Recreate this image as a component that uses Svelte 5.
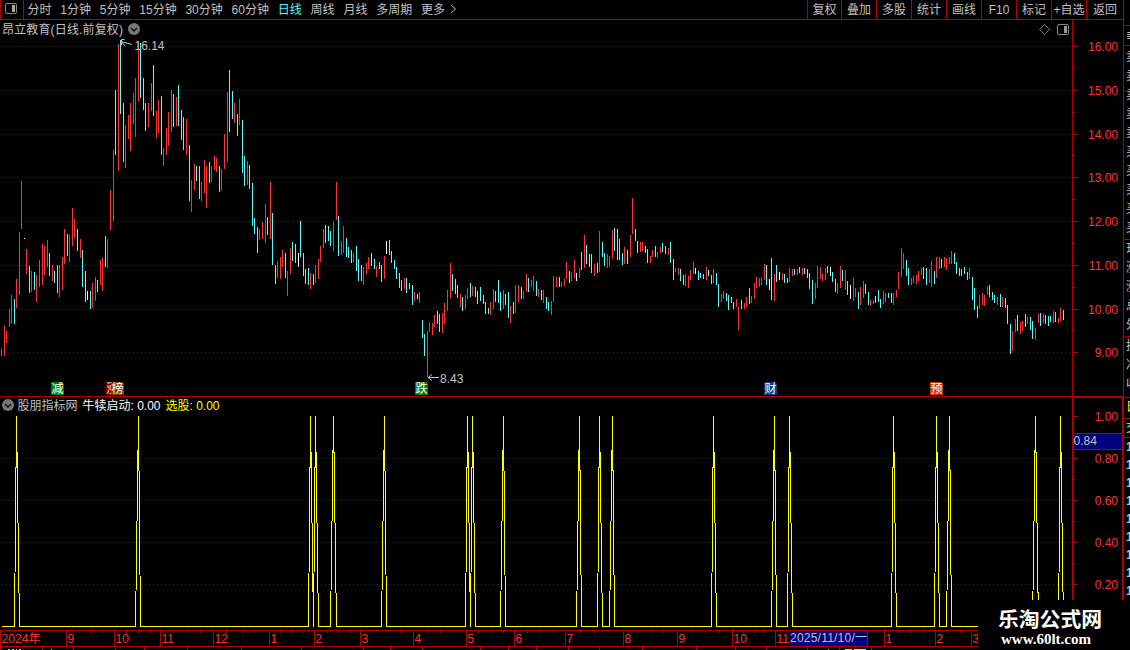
<script>
    const periods = ["分时", "1分钟", "5分钟", "15分钟", "30分钟", "60分钟", "日线", "周线", "月线", "多周期", "更多"];
    const tools = ["复权", "叠加", "多股", "统计", "画线", "F10", "标记", "+自选", "返回"];
    let active = $state("日线");

    // x, high, low, colour (r = up, c = down, w = flat)
    const raw = `1 349 356 r,4 326 356 r,6 331 343 r,9 309 327 r,11 295 324 r,14 299 324 c,16 279 308 r,19 232 295 r,21 181 229 r,24 238 239 w,
26 249 274 r,29 266 293 c,31 271 292 r,34 272 290 c,36 275 302 r,39 260 287 r,42 244 285 r,44 246 275 r,47 240 267 r,49 253 276 c,
52 265 281 r,54 271 283 c,57 265 293 c,59 265 297 r,62 257 290 r,64 229 264 r,67 234 256 c,69 235 262 r,72 208 246 r,74 219 238 r,
77 229 251 c,80 239 258 r,82 250 287 c,85 271 302 c,87 291 300 w,90 291 309 c,92 283 308 r,95 277 301 r,97 280 292 c,100 260 285 r,
102 258 291 r,105 236 267 c,107 239 268 r,110 190 230 r,113 150 221 r,115 90 155 c,118 44 171 r,120 40 114 c,123 103 162 c,125 125 168 r,
128 115 139 r,130 103 151 r,133 93 124 r,135 78 137 r,138 41 101 r,140 43 98 c,143 78 110 c,145 103 131 c,148 103 127 r,151 83 111 r,
153 65 116 c,156 111 138 r,158 100 133 r,161 96 155 c,163 148 166 r,166 128 155 r,168 112 146 r,171 90 132 r,173 94 127 c,176 97 126 r,
178 85 126 c,181 110 140 c,183 117 150 c,186 119 155 r,189 145 201 c,191 180 212 r,194 164 190 r,196 166 181 c,199 166 199 c,201 182 201 r,
204 160 193 r,206 166 208 r,209 162 183 c,211 166 182 r,214 156 170 r,216 158 172 r,219 166 192 c,221 169 191 r,224 134 169 r,227 92 162 r,
229 70 132 c,232 91 119 c,234 103 123 r,237 114 136 c,239 99 125 r,242 120 173 c,244 156 186 c,247 161 185 r,249 165 189 c,252 183 226 c,
254 218 234 c,257 227 253 c,259 229 240 r,262 222 239 r,265 204 243 r,267 217 235 c,270 182 239 r,272 213 265 c,275 265 284 c,277 261 278 r,
280 257 279 r,282 250 267 r,285 253 278 c,287 271 296 r,290 248 274 r,292 242 261 c,295 244 263 c,298 253 267 w,300 221 257 c,303 253 276 c,
305 269 284 c,308 268 285 c,310 273 289 r,313 274 285 c,315 265 283 r,318 259 279 r,320 246 262 r,323 229 248 r,325 225 243 c,328 226 241 c,
330 231 246 c,333 222 251 r,336 182 220 r,338 216 256 c,341 241 255 r,343 226 253 r,346 238 257 c,348 247 258 c,351 250 263 c,353 253 262 r,
356 246 271 c,358 259 281 c,361 265 281 c,363 267 285 r,366 263 274 r,368 257 269 r,371 253 266 c,374 259 269 c,376 266 277 r,379 262 269 c,
381 265 282 c,384 256 279 r,386 241 254 w,389 240 255 c,391 251 263 c,394 260 269 c,396 267 279 c,399 273 288 c,401 280 291 c,404 278 289 r,
406 278 293 c,409 283 289 c,412 285 305 c,414 292 301 r,417 294 299 c,419 292 303 r,422 320 338 c,424 334 356 c,427 331 377 r,429 322 332 r,
432 323 335 r,434 315 327 r,437 311 324 c,439 314 332 c,442 313 333 r,444 303 324 r,447 290 311 r,450 263 298 r,452 274 291 c,455 279 294 c,
457 285 298 c,460 294 307 r,462 297 311 c,465 295 309 r,467 288 299 r,470 283 297 c,472 286 296 r,475 287 297 c,477 291 304 c,480 287 301 c,
483 295 304 c,485 302 314 c,488 308 314 c,490 302 315 r,493 289 309 r,495 291 302 c,498 280 303 c,500 292 311 c,503 290 309 r,505 294 305 c,
508 292 318 c,510 306 323 r,513 302 314 c,515 285 313 r,518 285 302 r,521 287 299 c,523 291 299 r,526 274 292 r,528 278 292 c,531 280 287 r,
533 276 291 r,536 281 296 c,538 289 297 r,541 290 300 c,543 290 303 r,546 297 309 c,548 302 311 c,551 301 315 r,553 276 302 r,556 277 287 r,
559 277 287 c,561 282 287 r,564 279 286 r,566 262 279 r,569 271 283 c,571 272 281 r,574 260 278 r,576 273 281 w,579 268 278 r,581 252 270 c,
584 235 268 r,586 245 264 c,589 254 267 c,591 254 273 c,594 264 276 r,597 263 273 c,599 231 272 r,602 242 257 c,604 253 266 c,607 254 268 r,
609 256 267 r,612 230 259 r,614 228 251 c,617 229 260 c,619 239 260 c,622 253 265 c,624 247 264 r,627 250 264 c,630 235 257 r,632 198 234 r,
635 229 241 c,637 241 253 c,640 242 252 r,642 242 251 r,645 246 253 c,647 249 263 c,650 256 263 r,652 250 257 r,655 246 257 c,657 252 258 r,
660 247 253 r,662 243 252 c,665 246 254 c,668 248 255 r,670 242 263 c,673 259 280 c,675 268 272 r,678 268 275 r,680 269 281 c,683 275 285 c,
685 274 286 r,688 276 288 r,690 270 280 r,693 262 274 r,695 268 274 w,698 271 280 c,700 273 278 c,703 274 279 c,706 267 280 r,708 270 276 c,
711 275 284 c,713 269 283 r,716 273 285 c,718 284 307 c,721 294 302 r,723 291 299 r,726 293 301 c,728 295 310 c,731 297 303 c,733 302 309 c,
736 299 307 r,738 307 330 r,741 300 309 c,744 303 309 r,746 297 307 r,749 288 304 c,751 296 303 r,754 283 299 r,756 277 288 r,759 278 287 r,
761 277 285 r,764 264 280 r,766 265 285 c,769 279 290 w,771 258 300 c,774 274 301 r,776 265 282 c,779 272 280 w,782 273 280 r,784 274 283 c,
787 278 283 c,789 268 282 r,792 269 276 r,794 269 275 c,797 269 275 r,799 267 273 c,802 268 275 r,804 268 274 c,807 269 278 c,809 273 289 c,
812 280 304 c,815 283 299 r,817 266 288 r,820 267 279 r,822 274 281 r,825 268 280 r,827 266 273 c,830 267 276 w,832 272 282 c,835 279 292 c,
837 283 294 r,840 266 288 r,842 270 281 c,845 270 290 r,847 281 295 c,850 285 299 w,853 278 301 r,855 288 297 r,858 292 309 c,860 287 305 r,
863 281 298 r,865 284 294 c,868 292 305 c,870 300 306 r,873 300 304 r,875 296 303 c,878 290 302 c,880 299 308 c,883 291 304 r,885 293 302 r,
888 293 298 c,891 293 303 c,893 293 305 r,896 290 297 r,898 272 289 r,901 248 277 r,903 253 269 r,906 260 276 c,908 268 285 c,911 278 285 r,
913 276 283 r,916 275 284 r,918 271 281 r,921 268 275 r,923 267 279 c,926 268 285 c,929 269 283 r,931 261 287 r,934 271 284 c,936 257 278 r,
939 257 269 r,941 259 268 c,944 257 267 r,946 258 270 r,949 257 264 r,951 251 264 r,954 253 264 c,956 262 274 c,959 268 276 c,961 269 276 c,
964 267 274 c,967 272 280 c,969 268 279 r,972 277 300 c,974 288 310 c,977 306 318 c,979 295 309 r,982 293 305 r,984 295 306 r,987 286 295 r,
989 285 297 c,992 292 300 c,994 295 303 c,997 297 305 r,1000 294 307 c,1002 297 307 r,1005 298 308 c,1007 305 324 c,1010 324 354 c,1012 331 351 r,
1015 319 332 r,1017 315 331 c,1020 322 334 r,1022 321 331 r,1025 314 327 c,1027 317 324 r,1030 317 330 c,1032 321 339 c,1035 328 340 r,1038 314 323 r,
1040 313 326 c,1043 314 323 r,1045 315 324 c,1048 316 326 c,1050 316 322 c,1053 311 323 r,1055 312 322 c,1058 318 323 r,1060 308 321 r,1063 310 320 c`;
    const candles = raw.split(",").map(s => {
        const [x, top, bottom, kind] = s.trim().split(" ");
        return { x: +x, top: +top, bottom: +bottom, kind };
    });

    const prices = [16, 15, 14, 13, 12, 11, 10, 9];
    const levels = [1, 0.8, 0.6, 0.4, 0.2];
    const priceY = (p) => Math.round(46 + (16 - p) * 43.75);
    const levelY = (v) => Math.round(626 - v * 210);

    // days on which the signal fires
    const signals = [16, 138, 310, 315, 333, 384, 467, 472, 503, 579, 599, 612, 713, 774, 789, 893, 936, 949, 1035, 1060];
    const signalLine = candles.map(c => `${c.x + 0.5},${signals.includes(c.x) ? 416.5 : 626.5}`).join(" ");

    const badges = [
        { x: 51, text: "减", fill: "#008000" },
        { x: 106, text: "涨", fill: "#800000" },
        { x: 111, text: "榜", fill: "#804000" },
        { x: 415, text: "跌", fill: "#008000" },
        { x: 764, text: "财", fill: "#004080" },
        { x: 930, text: "预", fill: "#c04000" }
    ];

    const months = [[66, "9"], [114, "10"], [160, "11"], [213, "12"], [269, "1"], [314, "2"], [360, "3"], [413, "4"], [466, "5"],
        [514, "6"], [565, "7"], [623, "8"], [677, "9"], [732, "10"], [775, "11"], [884, "1"], [935, "2"], [971, "3"]];
    const weeks = [79, 90, 103, 126, 138, 150, 173, 187, 200, 226, 242, 255, 280, 292, 303, 327, 338, 350, 373, 387, 400, 427, 440, 453,
        478, 491, 503, 527, 539, 553, 580, 594, 609, 637, 651, 663, 691, 705, 719, 743, 754, 764, 898, 910, 923, 947, 960];
    const tabs = [0, 42, 73, 115, 144, 187, 241, 301, 363, 390, 422, 480, 508, 536, 568, 599, 642, 696, 735, 766, 807, 839, 871];

    const quotes = [
        { rows: ["卖", "卖", "卖", "卖", "卖", "买", "买", "买", "买", "买"], cls: "ten" },
        { rows: ["现", "涨", "涨", "总", "外"], cls: "five" },
        { rows: ["换", "净", "收"], cls: "three" }
    ];
</script>

<main class="app">
    <div class="left">
        <header>
            <div class="toggle">
                <svg width="12" height="11"><rect x="0.5" y="0.5" width="11" height="10" rx="1.5" fill="none" stroke="#888" /><rect x="7" y="2" width="3" height="7" fill="#aaa" /></svg>
            </div>
            <nav class="periods">
                {#each periods as p}
                    <button class:active={p === active} onclick={() => active = p}>{p}</button>
                {/each}
                <svg class="more" width="7" height="10"><path d="M1 1L5.5 5L1 9" fill="none" stroke="#c0c0c0" /></svg>
            </nav>
            <nav class="tools">
                {#each tools as t}
                    <button>{t}</button>
                {/each}
            </nav>
        </header>

        <svg class="price" viewBox="0 20 1124 377" width="1124" height="377">
            {#each prices as p}
                <line class="dots" x1="1" x2="1071" y1={priceY(p) + 0.5} y2={priceY(p) + 0.5} />
                <rect class="axis" x="1073" y={priceY(p)} width="5" height="1" />
                <text class="red" x="1118" y={priceY(p) + 5} text-anchor="end">{p.toFixed(2)}</text>
                {#if p > 9}
                    <rect class="axis" x="1073" y={priceY(p - 0.5)} width="2" height="1" />
                {/if}
            {/each}
            {#each candles as c}
                <rect class={c.kind} x={c.x} y={c.top} width="1" height={c.bottom - c.top} />
            {/each}

            <text class="grey" x="2" y="33.5" textLength="121">昂立教育(日线.前复权)</text>
            <circle cx="134" cy="29" r="6" fill="#777" />
            <path d="M131 28l3 3l3-3" fill="none" stroke="#111" stroke-width="1.5" />
            <path d="M1044.5 24.5l5 5l-5 5l-5-5z" fill="none" stroke="#777" />
            <rect x="1057.5" y="24.5" width="11" height="10" rx="1.5" fill="none" stroke="#888" />
            <rect x="1064" y="26" width="3" height="7" fill="#999" />

            <path class="arrow" d="M121 41.5L132 44.5M124.500 39.500H121.500V45M121 41L125 46" />
            <text class="grey" x="134.500" y="50">16.14</text>
            <path class="arrow" d="M428 377.500H439M432 374.500L428 377.500L432 380.500" />
            <text class="grey" x="440" y="383">8.43</text>

            {#each badges as b}
                <path d="M{b.x} 382h11l2 2v11h-13z" fill={b.fill} />
                <text class="badge" x={b.x + 0.5} y="393">{b.text}</text>
            {/each}
            <rect class="axis" x="1072" y="20" width="1" height="377" />
            <rect class="axis" x="0" y="396" width="1124" height="1" />
            <rect class="axis" x="1123" y="20" width="1" height="377" />
        </svg>

        <svg class="signal" viewBox="0 397 1124 233" width="1124" height="233">
            {#each levels as v}
                {#if v < 1}
                    <line class="dots" x1="1" x2="1071" y1={levelY(v) + 0.5} y2={levelY(v) + 0.5} />
                    <rect class="axis" x="1074" y={levelY(v + 0.1)} width="1" height="1" />
                {/if}
                <rect class="axis" x="1074" y={levelY(v)} width="4" height="1" />
                <text class="red" x="1118" y={levelY(v) + 5} text-anchor="end">{v.toFixed(2)}</text>
            {/each}
            <polyline class="spikes" points={signalLine} />
            <circle cx="8" cy="405" r="6" fill="#777" />
            <path d="M5 404l3 3l3-3" fill="none" stroke="#111" stroke-width="1.5" />
            <text class="grey" x="17.500" y="409.5">股朋指标网</text>
            <text class="white" x="82.500" y="409.5" textLength="78">牛犊启动: 0.00</text>
            <text class="yellow" x="165.500" y="409.5" textLength="54">选股: 0.00</text>

            <rect class="axis" x="1072" y="397" width="2" height="233" />
            <rect class="axis" x="1122" y="397" width="2" height="233" />
            <rect class="axis" x="1072" y="397" width="52" height="1" />
            <rect x="1074" y="433" width="48" height="17" fill="#000080" />
            <rect class="axis" x="1074" y="433" width="48" height="1" />
            <rect class="axis" x="1074" y="449" width="48" height="1" />
            <text class="grey" x="1073.500" y="445">0.84</text>
        </svg>

        <svg class="time" viewBox="0 630 1124 20" width="1124" height="20">
            <rect class="axis" x="0" y="630" width="978" height="1" />
            <rect class="axis" x="0" y="646" width="978" height="1" />
            <rect class="axis" x="0" y="630" width="1" height="16" />
            <text class="red" x="1.500" y="643" textLength="39">2024年</text>
            {#each months as [x, label]}
                <rect class="axis" {x} y="630" width="1" height="16" />
                <text class="red" x={x + 1.5} y="643">{label}</text>
            {/each}
            {#each weeks as x}
                <rect class="axis" {x} y="631" width="1" height="2" />
            {/each}
            {#each tabs as x}
                <rect class="axis" {x} y="647" width="1" height="3" />
            {/each}
            <rect x="789" y="631" width="79" height="15" fill="#000080" />
            <rect class="axis" x="867" y="631" width="1" height="15" />
            <text class="grey" x="790" y="642" textLength="77">2025/11/10/一</text>
            <path d="M8 649.500h2m2 0h2m2 0h1m2 0h2M51 649.500h1M828 649.500h1" stroke="#c0c0c0" />
            <path d="M845 649.500h7m2 0h12" stroke="#54fcfc" />
        </svg>
    </div>

    <aside>
        <div class="code"></div>
        <div class="name">≣</div>
        {#each quotes as q}
            <div class="group {q.cls}">
                {#each q.rows as r}
                    <span>{r}</span>
                {/each}
            </div>
        {/each}
        <div class="detail">日</div>
        <div class="trade">交</div>
        <div class="ticks">
            {#each Array(9) as _}
                <span>1</span>
            {/each}
        </div>
    </aside>

    <div class="mark">
        <strong>乐淘公式网</strong>
        <b>www.60lt.com</b>
    </div>
</main>

<style>
    :global(body) {
        background: #000;
        overflow: hidden;
    }

    .app {
        position: relative;
        display: flex;
        width: 1130px;
        height: 650px;
        overflow: hidden;
        background: #000;
        color: #c0c0c0;
        font: 12px/18px "Liberation Sans", "Noto Sans CJK SC", sans-serif;
    }

    .left {
        width: 1124px;
        flex: none;
    }

    svg {
        display: block;
    }

    header {
        display: flex;
        height: 20px;
        box-sizing: border-box;
        border-bottom: 1px solid #b00000;
        border-right: 1px solid #b00000;
    }

    button {
        padding: 0;
        border: 0;
        background: none;
        color: inherit;
        font: inherit;
        white-space: nowrap;
    }

    .toggle {
        width: 24px;
        box-sizing: border-box;
        border-left: 1px solid #b00000;
        border-right: 1px solid #b00000;
        padding: 3px 0 0 4px;
    }

    .periods {
        display: flex;
        gap: 8.8px;
        padding-left: 3.5px;
        flex: 1;
    }

    .periods .active {
        color: #54fcfc;
    }

    .more {
        margin: 4px 0 0 -4px;
    }

    .tools {
        display: flex;
    }

    .tools button {
        width: 35px;
        box-sizing: border-box;
        border-left: 1px solid #b00000;
    }

    .tools button:first-child {
        width: 34px;
    }

    .tools button:last-child {
        width: 37px;
    }

    .axis {
        fill: #b00000;
    }

    .dots {
        stroke: #a00000;
        stroke-dasharray: 1 3;
        shape-rendering: crispEdges;
    }

    .r { fill: #ff3232; }
    .c { fill: #54fcfc; }
    .w { fill: #fff; }

    .red { fill: #ff3232; }
    .grey { fill: #c0c0c0; }
    .white { fill: #fff; }
    .yellow { fill: #ff0; }

    .badge {
        fill: #fff;
    }

    .arrow {
        fill: none;
        stroke: #c0c0c0;
    }

    .spikes {
        fill: none;
        stroke: #ff0;
        shape-rendering: crispEdges;
    }

    aside {
        width: 6px;
        overflow: hidden;
        line-height: 19px;
        text-indent: 2px;
        white-space: nowrap;
    }

    aside > div {
        box-sizing: border-box;
        overflow: hidden;
        border-bottom: 1px solid #b00000;
    }

    aside span {
        display: block;
    }

    .code { height: 26px; }
    .name { height: 20px; }
    .ten { height: 97px; }
    .group.ten { height: 194px; padding-top: 2px; }
    .five { height: 97px; }
    .three { height: 61px; }

    .detail {
        height: 21px;
        color: #ff0;
    }

    .trade {
        height: 19px;
    }

    aside .ticks {
        border: 0;
        line-height: 18px;
        font-weight: bold;
    }

    .mark {
        position: absolute;
        left: 978px;
        top: 600px;
        width: 152px;
        height: 50px;
        background: #000;
        color: #fff;
    }

    .mark strong {
        display: block;
        margin: 6px 0 0 20px;
        font: 700 20.8px/25px "Noto Sans CJK SC", sans-serif;
    }

    .mark b {
        display: block;
        margin-left: 23px;
        font: bold 15px/16px "Liberation Serif", serif;
    }
</style>
